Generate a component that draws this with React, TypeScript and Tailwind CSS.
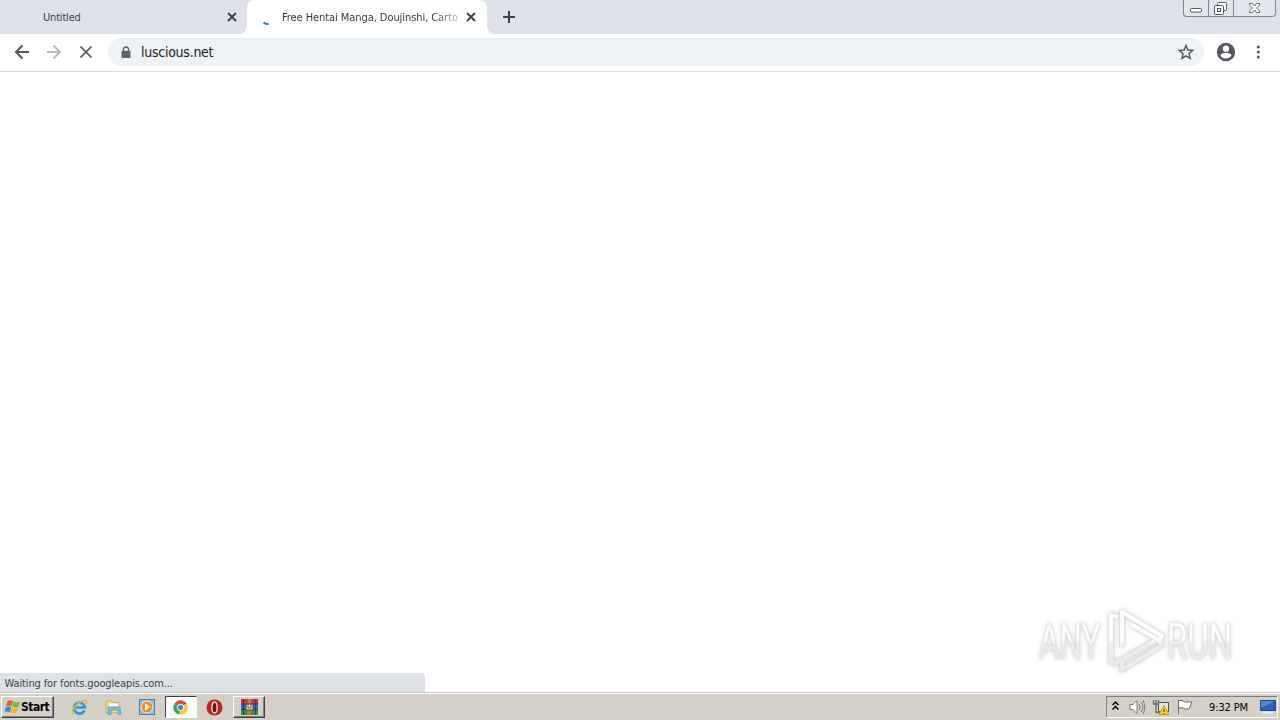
import type { ReactNode } from "react";

const UI_FONT = "font-['DejaVu_Sans_Condensed','DejaVu_Sans',sans-serif]";

function CloseGlyph() {
  return (
    <svg width="10" height="10" viewBox="0 0 10 10" stroke="#3c4043" strokeWidth="1.8">
      <path d="M1 1l8 8M9 1L1 9" />
    </svg>
  );
}

// ── Window buttons ────────────────────────────────────────────
function WindowControls() {
  return (
    <div className="mr-[4px] ml-auto flex h-[17px] w-[93px] rounded-b-[4px] border border-t-0 border-[#83868e] bg-[#e2e5eb]">
      <div className="w-[25px] border-r border-[#83868e]">
        <svg width="24" height="16" viewBox="0 0 24 16">
          <rect x="6.500" y="8.500" width="11" height="3.500" rx="1" fill="#fff" stroke="#55585f" />
        </svg>
      </div>
      <div className="w-[25px] border-r border-[#83868e]">
        <svg width="24" height="16" viewBox="0 0 24 16" fill="#fff" stroke="#55585f">
          <rect x="8.500" y="2.500" width="9" height="8" rx="1" />
          <rect x="5.500" y="5.500" width="9" height="9" rx="1" />
          <rect x="8.500" y="8.500" width="3" height="3" />
        </svg>
      </div>
      <div className="flex-1">
        <svg width="41" height="16" viewBox="0 0 41 16">
          <path
            d="M15.500 3.500h3l2 2.500 2-2.500h3v1.500l-3 3 3 3v1.500h-3l-2-2.500-2 2.500h-3v-1.500l3-3-3-3z"
            fill="#fff"
            stroke="#686b72"
          />
        </svg>
      </div>
    </div>
  );
}

function TabStrip() {
  return (
    <div className="flex h-[34px] bg-[#dee1e9]">
      <div className="flex w-[247px] items-center pr-[10px] pl-[43px]">
        <span className="flex-1 pt-[2px] text-[11px] tracking-[-0.18px] text-[#3c4043]">Untitled</span>
        <CloseGlyph />
      </div>
      <div className="relative flex w-[240px] items-center rounded-t-[8px] bg-white pr-[11px] pl-[15px]">
        <svg className="absolute bottom-0 -left-2" width="8" height="8">
          <path d="M8 0v8H0a8 8 0 0 0 8-8z" fill="#fff" />
        </svg>
        <svg className="absolute -right-2 bottom-0" width="8" height="8">
          <path d="M0 0v8h8a8 8 0 0 1-8-8z" fill="#fff" />
        </svg>
        <svg width="20" height="16" viewBox="0 0 20 16">
          <path d="M1.500 13.500q2.500 2 5 1.200" fill="none" stroke="#3c76c4" strokeWidth="2" />
        </svg>
        <div className="w-[177px] overflow-hidden bg-linear-to-r from-[#303438] from-85% to-[#3c404355] bg-clip-text pt-[2px] text-[11px] tracking-[-0.07px] whitespace-nowrap text-transparent">
          Free Hentai Manga, Doujinshi, Carto
        </div>
        <div className="ml-auto">
          <CloseGlyph />
        </div>
      </div>
      <svg className="mt-[11px] ml-[16px]" width="12" height="12" stroke="#3c4043" strokeWidth="2">
        <path d="M6 0v12M0 6h12" />
      </svg>
      <WindowControls />
    </div>
  );
}

function Toolbar() {
  return (
    <div className="flex h-[38px] items-center border-b border-[#d9dbdf] bg-white pb-px pl-[14px]">
      <svg width="16" height="16" fill="none" stroke="#55585c" strokeWidth="2">
        <path d="M15 8H2M8.500 1.500L2 8l6.500 6.500" />
      </svg>
      <svg className="ml-[16px]" width="16" height="16" fill="none" stroke="#b8babd" strokeWidth="2">
        <path d="M1 8h13M7.500 1.500L14 8l-6.500 6.500" />
      </svg>
      <svg className="ml-[18px]" width="12" height="12" stroke="#5f6368" strokeWidth="1.800">
        <path d="M.5.5l11 11M11.500.5l-11 11" />
      </svg>
      <div className="ml-[16px] flex h-7 w-[1096px] items-center rounded-full bg-[#eff2f5] pr-[10px] pl-[13px]">
        <svg width="10" height="13" viewBox="0 0 10 13">
          <path d="M2.500 6V3.500a2.500 2.500 0 0 1 5 0V6" fill="none" stroke="#5f6368" strokeWidth="1.300" />
          <rect x="0.500" y="4.800" width="9" height="7.200" rx="1" fill="#5f6368" />
        </svg>
        <span className="ml-[10px] flex-1 pt-px text-[14px] tracking-[-0.26px] text-[#202124]">luscious.net</span>
        <svg width="16" height="16" viewBox="0 0 24 24" fill="none" stroke="#55595e" strokeWidth="2.300">
          <path d="M12 2.500l2.800 6.600 7.200.6-5.500 4.700 1.700 7.100-6.200-3.800-6.200 3.800 1.700-7.100L2 9.700l7.200-.6z" />
        </svg>
      </div>
      <svg className="ml-[11px]" width="22" height="22" viewBox="0 0 24 24" fill="#55585e">
        <path d="M12 2a10 10 0 1 0 0 20 10 10 0 0 0 0-20zm0 3a3.400 3.400 0 1 1 0 6.800A3.400 3.400 0 0 1 12 5zm0 14.200a7.200 7.200 0 0 1-6-3.220c.03-1.990 4-3.080 6-3.080s5.970 1.090 6 3.080a7.200 7.200 0 0 1-6 3.220z" />
      </svg>
      <svg className="ml-[19px]" width="4" height="14" fill="#55585e">
        <circle cx="2.300" cy="2" r="1.500" />
        <circle cx="2.300" cy="7" r="1.500" />
        <circle cx="2.300" cy="12" r="1.500" />
      </svg>
    </div>
  );
}

// Two interlocking strokes make up the play mark
const PLAY_BACK = "M86 13L79 11v48l7-1 42-24";
const PLAY_FRONT = "M90 43V8l40 24-3 5M90 57v9l40-25-5-6-26-15";

function Watermark() {
  return (
    <svg
      className="absolute right-[36px] bottom-[16px] drop-shadow-[0_0_2px_#00000038]"
      width="212"
      height="72"
      viewBox="0 0 212 72"
    >
      <defs>
        <linearGradient id="fade" x1="0" y1="0" x2="0" y2="72" gradientUnits="userSpaceOnUse">
          <stop offset="0.500" stopColor="#fff" />
          <stop offset="0.560" stopColor="#ececec" />
        </linearGradient>
      </defs>
      <g className="font-['Roboto',sans-serif]" fontSize="50" fill="url(#fade)" stroke="#e2e2e2" strokeWidth="0.600">
        <text transform="translate(7 0) scale(0.63 1)" x="0" y="55">ANY</text>
        <text transform="translate(135 0) scale(0.66 1)" x="0" y="55">RUN</text>
      </g>
      <g fill="none" strokeLinejoin="round">
        <path d={PLAY_BACK} stroke="#dedede" strokeWidth="5" />
        <path d={PLAY_BACK} stroke="url(#fade)" strokeWidth="3.800" />
        <path d={PLAY_FRONT} stroke="#dedede" strokeWidth="5" />
        <path d={PLAY_FRONT} stroke="url(#fade)" strokeWidth="3.800" />
      </g>
    </svg>
  );
}

function TaskButton({ pressed, children }: { pressed?: boolean; children: ReactNode }) {
  return (
    <div
      className={`flex h-[22px] w-[32px] items-center justify-center border ${
        pressed
          ? "border-t-[#404040] border-r-white border-b-white border-l-[#404040] bg-white"
          : "border-t-white border-r-[#404040] border-b-[#404040] border-l-white bg-[#d4d0c8] shadow-[inset_-1px_-1px_#808080]"
      }`}
    >
      {children}
    </div>
  );
}

// ── Taskbar ───────────────────────────────────────────────────
function Taskbar() {
  return (
    <div className="flex h-[27px] items-center border-t border-white bg-[#d4d0c8] pl-px">
      <div className="flex h-[22px] w-[53px] items-center border border-t-white border-r-[#404040] border-b-[#404040] border-l-white pl-[2px] shadow-[inset_-1px_-1px_#808080]">
        <svg width="17" height="16" viewBox="0 0 16 16">
          <path d="M3 2q3-1.500 5.500 0L7 7.300q-2.500-1.300-5.300 0z" fill="#e5632b" />
          <path d="M9 2.500q3 1.500 6.500 0L14 7.700q-3 1-6.300 0z" fill="#78b832" />
          <path d="M1.300 8q3-1.200 5.400 0L5.300 13.300q-2.500-1.500-5.300 0z" fill="#3588d5" />
          <path d="M7.400 8.400q3 1 6.300 0L12 13.700q-3 1.500-6.300 0z" fill="#f6b920" />
        </svg>
        <span className="text-[12px] font-bold tracking-[-0.5px] text-black">Start</span>
      </div>
      <svg className="ml-[17px]" width="17" height="17" viewBox="0 0 17 17" fill="none">
        <path d="M13.500 11.500A5.500 5.500 0 1 1 14 8.500H5" stroke="#2f9bdc" strokeWidth="2.700" />
        <path d="M2 15.500C-1.500 12 8 1 15 1.500q2 1-.5 4" stroke="#e7b63d" strokeWidth="1.500" />
      </svg>
      <svg className="ml-[17px]" width="17" height="17" viewBox="0 0 17 17">
        <path d="M1 2.500l5-1 2 2h6v10H1z" fill="#f4d979" stroke="#c8a24b" strokeWidth="0.700" />
        <path d="M4 4.500h9v3H4z" fill="#f8fcef" />
        <path d="M3 8h12l1 7.500h-3V11H6v4.500H3z" fill="#78bee5" stroke="#5299c7" strokeWidth="0.700" />
      </svg>
      <svg className="ml-[17px]" width="17" height="17" viewBox="0 0 17 17">
        <rect x="0.500" y="0.500" width="15" height="15" fill="#86bce7" stroke="#4381b9" />
        <circle cx="8" cy="8" r="6" fill="#f28b20" stroke="#fff" strokeWidth="0.800" />
        <path d="M6 4.500l5.500 3.500L6 11.500z" fill="#fff" />
      </svg>
      <div className="ml-[9px]">
        <TaskButton pressed>
          <svg className="-ml-px" width="15" height="15" viewBox="0 0 16 16">
            <path d="M8 8L1.500 4A7.500 7.500 0 0 1 14.500 4z" fill="#df4938" />
            <path d="M8 8L1.500 4A7.500 7.500 0 0 0 7 15.500z" fill="#35a557" />
            <path d="M8 8l6.500-4A7.500 7.500 0 0 1 7 15.500z" fill="#fbcb35" />
            <circle cx="8" cy="8" r="3.500" fill="#4788df" stroke="#fff" />
          </svg>
        </TaskButton>
      </div>
      <svg className="ml-[9px]" width="17" height="17" viewBox="0 0 17 17">
        <circle cx="8.500" cy="8.500" r="8" fill="#b92420" />
        <ellipse cx="8.500" cy="8.500" rx="2.600" ry="5.500" fill="#7d0b10" stroke="#f6e9e7" strokeWidth="1.300" />
      </svg>
      <div className="ml-[10px]">
        <TaskButton>
          <svg width="17" height="16" viewBox="0 0 17 16">
            <path d="M0 0h17v5H0z" fill="#c92c44" />
            <path d="M0 5h17v5H0z" fill="#3e63c0" />
            <path d="M0 10h17v6H0z" fill="#339044" />
            <path d="M6.500 0h4v16h-4z" fill="#be7a3e" />
            <path d="M5 5h7v6H5z" fill="#f4ebda" stroke="#493b38" />
            <path d="M7 5v4h3V5M2.500 0v16M14.500 0v16M0 5h5M12 5h5M0 10.500h5M12 10.500h5" fill="none" stroke="#3d3040" strokeWidth="0.800" />
          </svg>
        </TaskButton>
      </div>

      {/* Notification area */}
      <div className="mr-[2px] ml-auto flex h-[22px] w-[172px] items-center border border-t-[#808080] border-r-white border-b-white border-l-[#808080] pl-[5px]">
        <svg className="-mt-[2px]" width="7" height="10" fill="none" stroke="#000" strokeWidth="1.500">
          <path d="M.5 4l3-3 3 3M.5 8.500l3-3 3 3" />
        </svg>
        <svg className="ml-[10px]" width="17" height="16" viewBox="0 0 17 16" fill="none" stroke="#77797a">
          <path d="M1 5.500h3l4-4v13l-4-4H1z" fill="#fff" />
          <path d="M10 5q2 3 0 6M12 3q4 5 0 10M14 1q3.500 7 0 14" />
        </svg>
        <svg className="ml-[7px]" width="17" height="17" viewBox="0 0 17 17">
          <path d="M5.500 3.500h10v9h-10z" fill="#e2e5e8" stroke="#4b4f54" />
          <path d="M.5 1v4h5V1M3 1v12.500h5" fill="none" stroke="#66696c" strokeWidth="1.300" />
          <path d="M11 6.500l5 9h-10z" fill="#fbd42c" stroke="#c79a16" />
          <path d="M11 10v3M11 14v1" stroke="#4d3800" />
        </svg>
        <svg className="ml-[6px]" width="17" height="16" viewBox="0 0 17 16">
          <path d="M2.500 1.500q4-1 6 1.500h7.500l-3 7H9q-2-2-6.500-1M2.500 1v14" fill="#fff" stroke="#686b6d" />
        </svg>
        <span className="ml-[16px] w-[43px] pt-[2px] text-[11px] tracking-[-0.12px] whitespace-nowrap text-black">9:32 PM</span>
        <svg className="ml-[8px]" width="16" height="14" viewBox="0 0 16 14">
          <path d="M.5.5h15v10H.5z" fill="#2e61b8" stroke="#174b8c" />
          <path d="M1 1h14L3 7H1z" fill="#5088d0" />
          <path d="M3 12.500h10" stroke="#e9f0f5" strokeWidth="2" />
        </svg>
      </div>
    </div>
  );
}

export default function App() {
  return (
    <div className={`flex h-[720px] w-[1280px] flex-col overflow-hidden bg-white ${UI_FONT}`}>
      <TabStrip />
      <Toolbar />
      <main className="relative flex-1 border-b border-[#c7c9c2] bg-white">
        <Watermark />
        <div className="absolute bottom-0 left-0 h-[19px] w-[425px] rounded-tr-[4px] bg-[#dee1e6] pl-[4.500px] text-[11px] leading-[21px] tracking-[-0.12px] text-[#3c4043]">
          Waiting for fonts.googleapis.com...
        </div>
      </main>
      <Taskbar />
    </div>
  );
}
